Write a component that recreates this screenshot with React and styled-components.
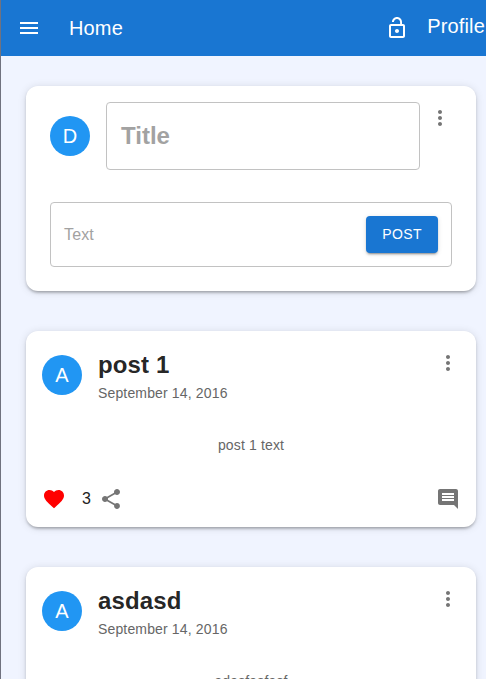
import React from "react";
import styled, { createGlobalStyle } from "styled-components";

const GlobalStyle = createGlobalStyle`
  * { box-sizing: border-box; }
  body { margin: 0; background: #fff; font-family: "Liberation Sans", Arial, sans-serif; }
`;

const Page = styled.div`
  width: 486px;
  height: 679px;
  overflow: hidden;
  background: #f0f4ff;
  border-left: 1px solid #70727f;
`;

const AppBar = styled.header`
  height: 56px;
  display: flex;
  align-items: center;
  padding-left: 16px;
  background: #1976d2;
  color: #fff;
`;

const BarTitle = styled.div`
  flex: 1;
  margin-left: 28px;
  font-size: 20px;
  line-height: 32px;
  letter-spacing: 0.15px;
`;

const ProfileLink = styled.div`
  margin: 0 1px 4px 18px;
  font-size: 20px;
  line-height: 32px;
  letter-spacing: 0.15px;
`;

const Icon = styled.svg`
  display: block;
  flex: none;
  width: 24px;
  height: 24px;
  fill: ${(p) => p.$color || "currentColor"};
`;

const Feed = styled.main`
  display: flex;
  flex-direction: column;
  gap: 40px;
  padding: 30px 10px 0 25px;
`;

const Card = styled.article`
  flex: none;
  height: ${(p) => p.$height};
  padding: ${(p) => p.$padding};
  border-radius: 12px;
  background: #fff;
  color: rgba(0, 0, 0, 0.87);
  box-shadow: 0 3px 3px -2px rgba(0, 0, 0, 0.2), 0 2px 3px rgba(0, 0, 0, 0.14),
    0 1px 8px rgba(0, 0, 0, 0.12);
`;

const Avatar = styled.div`
  flex: none;
  width: 40px;
  height: 40px;
  display: flex;
  align-items: center;
  justify-content: center;
  border-radius: 50%;
  background: #2196f3;
  color: #fff;
  font-size: 20px;
  line-height: 20px;
`;

const ComposeHeader = styled.div`
  display: flex;
  align-items: center;
  height: 68px;
`;

const ComposeMenu = styled.div`
  align-self: flex-start;
  margin: 4px 0 0 8px;
`;

const Field = styled.div`
  display: flex;
  align-items: center;
  border: 1px solid #c2c2c2;
  border-radius: 4px;
  color: #a2a2a2;
`;

const TitleField = styled(Field)`
  flex: 1;
  height: 68px;
  margin-left: 16px;
  padding-left: 14px;
  font-size: 24px;
  font-weight: 700;
`;

const TextField = styled(Field)`
  height: 65px;
  margin-top: 32px;
  padding: 0 13px;
  justify-content: space-between;
  font-size: 16px;
  letter-spacing: 0.15px;
`;

const PostButton = styled.button`
  width: 72px;
  height: 37px;
  padding: 0 0 2px;
  border: 0;
  border-radius: 4px;
  background: #1976d2;
  color: #fff;
  font: 14px "Liberation Sans", Arial, sans-serif;
  letter-spacing: 0.4px;
  box-shadow: 0 3px 1px -2px rgba(0, 0, 0, 0.2), 0 2px 2px rgba(0, 0, 0, 0.14),
    0 1px 5px rgba(0, 0, 0, 0.12);
`;

const PostHeader = styled.div`
  display: flex;
  align-items: center;
  height: 56px;
`;

const PostHeading = styled.div`
  flex: 1;
  margin-left: 16px;
`;

const PostTitle = styled.h2`
  margin: 0;
  font-size: 24px;
  line-height: 36px;
  font-weight: 700;
  letter-spacing: 0.15px;
`;

const PostDate = styled.div`
  font-size: 14px;
  line-height: 20px;
  letter-spacing: 0.15px;
  color: #666;
`;

const PostMenu = styled.div`
  align-self: flex-start;
  margin-top: 4px;
`;

const PostBody = styled.p`
  margin: 32px 0 0;
  text-align: center;
  font-size: 14px;
  line-height: 20px;
  letter-spacing: 0.15px;
  color: #666;
`;

const PostActions = styled.div`
  display: flex;
  align-items: center;
  height: 40px;
  margin-top: 24px;
  color: #757575;
`;

const LikeCount = styled.span`
  width: 9px;
  margin: 0 8px 0 16px;
  color: #212121;
  font-size: 16px;
`;

const Spacer = styled.div`
  flex: 1;
`;

const paths = {
  menu: "M3 18h18v-2H3v2zm0-5h18v-2H3v2zm0-7v2h18V6H3z",
  lock: "M12 17c1.1 0 2-.9 2-2s-.9-2-2-2-2 .9-2 2 .9 2 2 2zm6-9h-1V6c0-2.76-2.24-5-5-5S7 3.24 7 6h1.9c0-1.71 1.39-3.1 3.1-3.1 1.71 0 3.1 1.39 3.1 3.1v2H6c-1.1 0-2 .9-2 2v10c0 1.1.9 2 2 2h12c1.1 0 2-.9 2-2V10c0-1.1-.9-2-2-2zm0 12H6V10h12v10z",
  more: "M12 8c1.1 0 2-.9 2-2s-.9-2-2-2-2 .9-2 2 .9 2 2 2zm0 2c-1.1 0-2 .9-2 2s.9 2 2 2 2-.9 2-2-.9-2-2-2zm0 6c-1.1 0-2 .9-2 2s.9 2 2 2 2-.9 2-2-.9-2-2-2z",
  heart: "M12 21.35l-1.45-1.32C5.4 15.36 2 12.28 2 8.5 2 5.42 4.42 3 7.5 3c1.74 0 3.41.81 4.5 2.09C13.09 3.81 14.76 3 16.5 3 19.58 3 22 5.42 22 8.5c0 3.78-3.4 6.86-8.55 11.54L12 21.35z",
  share: "M18 16.08c-.76 0-1.44.3-1.96.77L8.91 12.7c.05-.23.09-.46.09-.7s-.04-.47-.09-.7l7.05-4.11c.54.5 1.25.81 2.04.81 1.66 0 3-1.34 3-3s-1.34-3-3-3-3 1.34-3 3c0 .24.04.47.09.7L8.04 9.81C7.5 9.31 6.79 9 6 9c-1.66 0-3 1.34-3 3s1.34 3 3 3c.79 0 1.5-.31 2.04-.81l7.12 4.16c-.05.21-.08.43-.08.65 0 1.61 1.31 2.92 2.92 2.92 1.61 0 2.92-1.31 2.92-2.92s-1.31-2.92-2.92-2.92z",
  comment: "M21.99 4c0-1.1-.89-2-1.99-2H4c-1.1 0-2 .9-2 2v12c0 1.1.9 2 2 2h14l4 4-.01-18zM18 14H6v-2h12v2zm0-3H6V9h12v2zm0-3H6V6h12v2z",
};

const Glyph = ({ name, color }) => (
  <Icon viewBox="0 0 24 24" $color={color}>
    <path d={paths[name]} />
  </Icon>
);

const posts = [
  { id: 1, title: "post 1", text: "post 1 text", likes: 3 },
  { id: 2, title: "asdasd", text: "adasfasfasf" },
];

const Post = ({ title, text, likes }) => (
  <Card $height="196px" $padding="16px 16px 8px">
    <PostHeader>
      <Avatar>A</Avatar>
      <PostHeading>
        <PostTitle>{title}</PostTitle>
        <PostDate>September 14, 2016</PostDate>
      </PostHeading>
      <PostMenu>
        <Glyph name="more" color="#757575" />
      </PostMenu>
    </PostHeader>
    <PostBody>{text}</PostBody>
    <PostActions>
      <Glyph name="heart" color="#f00" />
      <LikeCount>{likes}</LikeCount>
      <Glyph name="share" />
      <Spacer />
      <Glyph name="comment" />
    </PostActions>
  </Card>
);

export default function App() {
  return (
    <>
      <GlobalStyle />
      <Page>
        <AppBar>
          <Glyph name="menu" />
          <BarTitle>Home</BarTitle>
          <Glyph name="lock" />
          <ProfileLink>Profile</ProfileLink>
        </AppBar>
        <Feed>
          <Card $height="205px" $padding="16px 24px 24px">
            <ComposeHeader>
              <Avatar>D</Avatar>
              <TitleField>Title</TitleField>
              <ComposeMenu>
                <Glyph name="more" color="#757575" />
              </ComposeMenu>
            </ComposeHeader>
            <TextField>
              <span>Text</span>
              <PostButton>POST</PostButton>
            </TextField>
          </Card>
          {posts.map((p) => (
            <Post key={p.id} {...p} />
          ))}
        </Feed>
      </Page>
    </>
  );
}
